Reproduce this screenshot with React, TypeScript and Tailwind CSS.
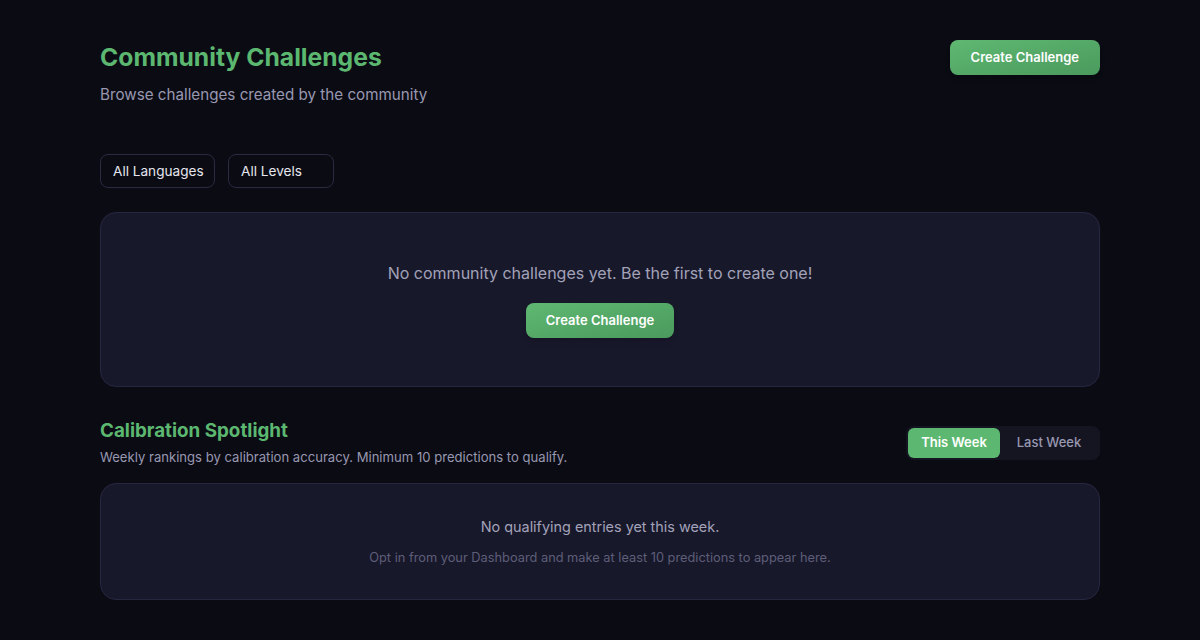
import React from "react";

export default function App() {
  const font = { fontFamily: "Inter, 'Noto Sans', sans-serif" };
  return (
    <div className="min-h-[640px] w-full bg-[#0b0b14]" style={font}>
      <div className="mx-auto w-[1000px] pt-[40px]">
        <div className="flex items-start justify-between">
          <div>
            <h1 className="text-[24.7px] font-bold leading-[34px] text-[#5cb870]">Community Challenges</h1>
            <p className="mt-[11px] text-[15.2px] leading-[20px] text-[#9898b0]">Browse challenges created by the community</p>
          </div>
          <button className="h-[35px] rounded-lg bg-gradient-to-br from-[#5fb872] to-[#4a9a5d] px-[21px] text-[13px] font-semibold text-white shadow-md">
            Create Challenge
          </button>
        </div>

        <div className="mt-[49px] flex gap-[13px]">
          <button className="h-[34px] w-[115px] whitespace-nowrap rounded-lg border border-[#2a2a40] bg-[#0b0b14] pl-3 text-left text-[13.6px] text-[#e6e6ee]">All Languages</button>
          <button className="h-[34px] w-[106px] whitespace-nowrap rounded-lg border border-[#2a2a40] bg-[#0b0b14] pl-3 text-left text-[13.6px] text-[#e6e6ee]">All Levels</button>
        </div>

        <div className="mt-[24px] flex h-[175px] flex-col items-center justify-center rounded-2xl border border-[#262640] bg-[#18182b]">
          <p className="text-[16px] text-[#a2a2b8]">No community challenges yet. Be the first to create one!</p>
          <button className="mt-[18px] h-[35px] rounded-lg bg-gradient-to-br from-[#5fb872] to-[#4a9a5d] px-5 text-[13px] font-semibold text-white shadow-md">
            Create Challenge
          </button>
        </div>

        <div className="mt-[30px] flex items-start justify-between">
          <div>
            <h2 className="text-[18.8px] font-bold leading-[28px] text-[#5cb870]">Calibration Spotlight</h2>
            <p className="mt-[2px] text-[13.1px] leading-[20px] text-[#9898b0]">Weekly rankings by calibration accuracy. Minimum 10 predictions to qualify.</p>
          </div>
          <div className="mt-[9px] flex rounded-lg bg-[#151522] p-[2px]">
            <button className="h-[30px] w-[92px] rounded-md bg-[#5cb870] text-[13px] font-semibold text-white">This Week</button>
            <button className="h-[30px] w-[98px] rounded-md text-[13px] font-medium text-[#9898b0]">Last Week</button>
          </div>
        </div>

        <div className="mt-[16px] flex h-[117px] flex-col items-center justify-center rounded-2xl border border-[#262640] bg-[#18182b]">
          <p className="text-[14.4px] text-[#a2a2b8]">No qualifying entries yet this week.</p>
          <p className="mt-[11px] text-[12.8px] text-[#5e5e78]">Opt in from your Dashboard and make at least 10 predictions to appear here.</p>
        </div>
      </div>
    </div>
  );
}
